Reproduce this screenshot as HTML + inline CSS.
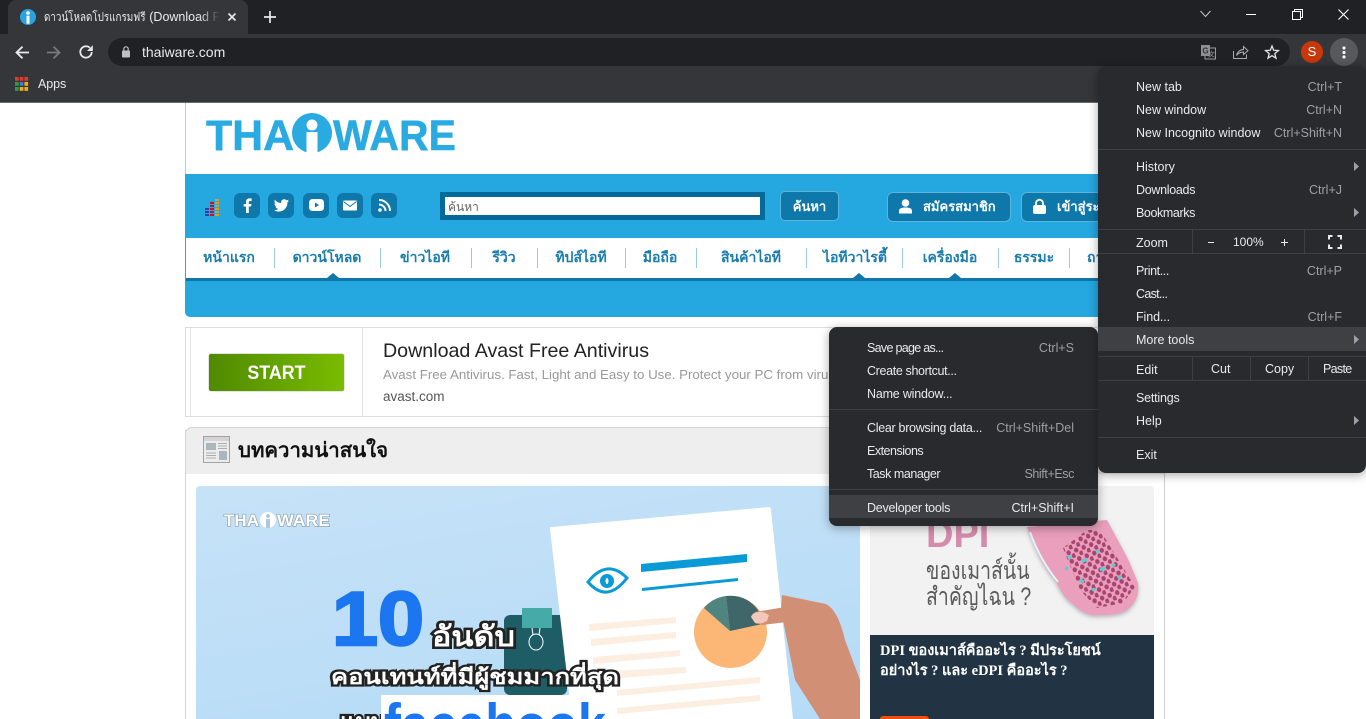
<!DOCTYPE html>
<html><head><meta charset="utf-8"><style>
html,body{margin:0;padding:0;width:1366px;height:719px;overflow:hidden;background:#fff}
body{position:relative;font-family:"Liberation Sans","Noto Sans CJK SC",sans-serif}
#w{position:absolute;left:0;top:0;width:1366px;height:719px;overflow:hidden}
.a{position:absolute}
.t{position:absolute;white-space:nowrap;line-height:20px;height:20px}
.m{color:#e8eaed;font-size:12.5px}
.s{color:#9aa0a6;font-size:12.5px;text-align:right}
.l{position:absolute;background:#3f4043}
.n{position:absolute;top:247px;color:#1a7cad;font-size:14px;font-weight:bold;line-height:20px;white-space:nowrap;transform:translateX(-50%)}
.d{position:absolute;top:248px;width:1px;height:20px;background:#9ccbe6}
.tri{position:absolute;top:273px;width:0;height:0;border-left:6px solid transparent;border-right:6px solid transparent;border-bottom:5px solid #0e76a8}
.b{position:absolute;background:#0e78ab;border-radius:6px}
svg{position:absolute;overflow:visible}
</style></head><body><div id="w">

<!-- chrome frame -->
<div class="a" style="left:0;top:0;width:1366px;height:34px;background:#202124"></div>
<div class="a" style="left:8px;top:0;width:240px;height:34px;background:#35363a;border-radius:8px 8px 0 0"></div>
<div class="a" style="left:0;top:34px;width:1366px;height:68px;background:#35363a"></div>
<div class="a" style="left:0;top:102px;width:1366px;height:1px;background:#6a6b6e"></div>
<svg style="left:20px;top:9px" width="16" height="16"><circle cx="8" cy="8" r="8" fill="#29a3e2"/><circle cx="8" cy="4" r="1.8" fill="#fff"/><rect x="6.5" y="6.7" width="3" height="8" fill="#fff"/></svg>
<div class="t" style="left:44px;top:7px;width:176px;overflow:hidden;color:#e8eaed;font-size:12.5px;-webkit-mask-image:linear-gradient(90deg,#000 88%,transparent)"><span style="display:inline-block;transform:scaleX(.82);transform-origin:left;margin-right:-22px;font-size:12px">ดาวน์โหลดโปรแกรมฟรี</span> (Download Fr</div>
<svg style="left:228px;top:13px" width="8" height="8"><path d="M.5 .5L7.5 7.5M7.5 .5L.5 7.5" stroke="#e8eaed" stroke-width="1.6"/></svg>
<svg style="left:264px;top:11px" width="12" height="12"><path d="M6 0V12M0 6H12" stroke="#e8eaed" stroke-width="1.7"/></svg>
<svg style="left:1200px;top:10px" width="11" height="8"><path d="M.5 1L5.5 6.5L10.5 1" stroke="#c4c6c9" fill="none"/></svg>
<div class="a" style="left:1246px;top:14px;width:10px;height:1px;background:#fff"></div>
<svg style="left:1292px;top:9px" width="11" height="11"><path d="M2.5 2.5V.5H10.5V8.5H8.5M.5 2.5H8.5V10.5H.5Z" stroke="#fff" fill="none"/></svg>
<svg style="left:1338px;top:9px" width="11" height="11"><path d="M.5 .5L10.5 10.5M10.5 .5L.5 10.5" stroke="#fff" stroke-width="1.1"/></svg>

<!-- toolbar -->
<svg style="left:15px;top:46px" width="14" height="13"><path d="M14 6.5H2M7.500 .7L1.500 6.500L7.500 12.300" stroke="#e8eaed" stroke-width="1.800" fill="none"/></svg>
<svg style="left:47px;top:46px" width="14" height="13"><path d="M0 6.5H12M6.500 .7L12.500 6.500L6.500 12.300" stroke="#77797c" stroke-width="1.800" fill="none"/></svg>
<svg style="left:79px;top:45px" width="14" height="14"><path d="M12.700 7A5.700 5.700 0 1 1 10.800 2.700" stroke="#e8eaed" stroke-width="1.800" fill="none"/><path d="M13.800 .3V6H8Z" fill="#e8eaed"/></svg>
<div class="a" style="left:108px;top:38px;width:1182px;height:28px;background:#202124;border-radius:14px"></div>
<svg style="left:122px;top:46px" width="9" height="12"><rect y="4.5" width="8" height="7" rx="1" fill="#bdc1c6"/><path d="M1.8 5V3A2.2 2.2 0 0 1 6.2 3V5" stroke="#bdc1c6" stroke-width="1.2" fill="none"/></svg>
<div class="t" style="left:142px;top:42px;color:#e8eaed;font-size:14px">thaiware.com</div>
<svg style="left:1201px;top:45px" width="15" height="15"><rect x="4" y="3" width="10.5" height="11" fill="none" stroke="#9a9ea3"/><rect x="0" y="0" width="9" height="11" fill="#8c9095"/><text x="4.5" y="8.5" font-size="8" text-anchor="middle" fill="#35363a" font-weight="bold">G</text><text x="10.5" y="11.5" font-size="7" text-anchor="middle" fill="#9a9ea3">文</text></svg>
<svg style="left:1233px;top:45px" width="15" height="14"><path d="M.5 6V13.5H13.5V9.5" stroke="#aaaeb3" fill="none"/><path d="M3.5 10.5C4.5 6.5 7.5 4.5 10.5 4.5V1.5L15 5.7L10.5 9.5V7C8 7 5.5 8 3.5 10.5Z" stroke="#aaaeb3" fill="none"/></svg>
<svg style="left:1265px;top:45px" width="14" height="14"><path d="M7 1L8.7 5.3L13.4 5.6L9.8 8.6L11 13.2L7 10.7L3 13.2L4.2 8.6L.6 5.6L5.3 5.3Z" stroke="#e0e2e5" stroke-width="1.3" fill="none"/></svg>
<div class="a" style="left:1301px;top:41px;width:22px;height:22px;border-radius:50%;background:#c8380a"></div>
<div class="t" style="left:1301px;top:42px;width:22px;text-align:center;color:#fff;font-size:13px">S</div>
<div class="a" style="left:1330px;top:38px;width:28px;height:28px;border-radius:50%;background:#58595c"></div>
<svg style="left:1342px;top:46px" width="4" height="13"><circle cx="2" cy="2" r="1.6" fill="#f1f3f4"/><circle cx="2" cy="6.5" r="1.6" fill="#f1f3f4"/><circle cx="2" cy="11" r="1.6" fill="#f1f3f4"/></svg>

<!-- bookmarks -->
<svg style="left:15px;top:77px" width="13" height="14">
<rect width="3.7" height="3.8" fill="#e0392d"/><rect x="4.7" width="3.7" height="3.8" fill="#e0392d"/><rect x="9.4" width="3.7" height="3.8" fill="#e0392d"/>
<rect y="5" width="3.7" height="3.8" fill="#2f9a4e"/><rect x="4.7" y="5" width="3.7" height="3.8" fill="#3f78e0"/><rect x="9.4" y="5" width="3.7" height="3.8" fill="#f0ad17"/>
<rect y="10" width="3.7" height="3.8" fill="#2f9a4e"/><rect x="4.7" y="10" width="3.7" height="3.8" fill="#f0ad17"/><rect x="9.4" y="10" width="3.7" height="3.8" fill="#f0ad17"/></svg>
<div class="t" style="left:38px;top:74px;color:#e8eaed;font-size:12.5px;letter-spacing:-.1px">Apps</div>

<!-- page container -->
<div class="a" style="left:185px;top:103px;width:1px;height:72px;background:#a6cfe4"></div>
<div class="a" style="left:1164px;top:103px;width:1px;height:616px;background:#cfcfcf"></div>
<div class="a" style="left:185px;top:430px;width:1px;height:289px;background:#d5d5d5"></div>

<!-- logo -->
<svg style="left:206px;top:113px" width="251" height="42">
<text x="0" y="37" font-family="Liberation Sans" font-weight="bold" font-size="43" fill="#29abe2" stroke="#29abe2" stroke-width=".5" textLength="88" lengthAdjust="spacingAndGlyphs">THA</text>
<circle cx="106" cy="20" r="20" fill="#29abe2"/><circle cx="106" cy="12" r="5.5" fill="#fff"/><path d="M100.500 19H111.500V40H100.500Z" fill="#fff"/>
<text x="127" y="37" font-family="Liberation Sans" font-weight="bold" font-size="43" fill="#29abe2" stroke="#29abe2" stroke-width=".5" textLength="123" lengthAdjust="spacingAndGlyphs">WARE</text>
</svg>

<!-- blue header -->
<div class="a" style="left:185px;top:174px;width:980px;height:143px;background:#25a7e0;border-radius:0 0 0 5px"></div>
<div class="a" style="left:186px;top:238px;width:979px;height:40px;background:#fff"></div>
<div class="a" style="left:186px;top:278px;width:979px;height:3px;background:#0e76a8"></div>
<svg style="left:205px;top:199px" width="15" height="18">
<path d="M0 9h4v2H0zM0 12h4v2H0zM0 15h4v2H0z" fill="#2b3da8"/>
<path d="M5 3h4v2H5zM5 6h4v2H5zM5 9h4v2H5zM5 12h4v2H5zM5 15h4v2H5z" fill="#c2112d"/>
<path d="M10 0h4v2h-4zM10 3h4v2h-4zM10 6h4v2h-4zM10 9h4v2h-4zM10 12h4v2h-4zM10 15h4v2h-4z" fill="#ee9a14"/></svg>
<div class="b" style="left:234px;top:193px;width:26px;height:25px"></div>
<div class="b" style="left:268px;top:193px;width:26px;height:25px"></div>
<div class="b" style="left:303px;top:193px;width:26px;height:25px"></div>
<div class="b" style="left:337px;top:193px;width:26px;height:25px"></div>
<div class="b" style="left:371px;top:193px;width:26px;height:25px"></div>
<svg style="left:243px;top:198px" width="9" height="15"><path d="M3 15V8.5H.7V6H3V4C3 1.6 4.4.4 6.4.4H8.6V3H7C6.1 3 5.8 3.4 5.8 4.2V6H8.5L8.1 8.5H5.8V15Z" fill="#fff"/></svg>
<svg style="left:273.500px;top:199px" width="15" height="13"><path d="M15 1.800C14.400 2 13.900 2.200 13.200 2.300 13.900 1.900 14.400 1.200 14.600.500 14 .900 13.300 1.100 12.600 1.300 11.300-.100 9.200-.100 8 1.100 7.200 1.900 6.900 3 7.200 4.100 4.700 4 2.400 2.800.900.800.100 2.200.500 4 1.800 4.900 1.300 4.900.800 4.700.400 4.500.400 6 1.500 7.300 2.900 7.600 2.500 7.700 2 7.700 1.500 7.600 1.900 8.900 3.100 9.800 4.400 9.800 3.100 10.800 1.600 11.400 0 11.200 1.400 12.100 3 12.600 4.700 12.600 10.400 12.600 13.600 7.800 13.400 3.500 14 3 14.600 2.500 15 1.800Z" fill="#fff"/></svg>
<svg style="left:308.500px;top:199px" width="15" height="12"><rect width="15" height="12" rx="3.500" fill="#fff"/><path d="M6 3.500L10 6L6 8.500Z" fill="#0e78ab"/></svg>
<svg style="left:343px;top:200px" width="14" height="11"><rect width="14" height="10" y=".5" rx="1" fill="#fff"/><path d="M.5 1.500L7 6.500L13.500 1.500" stroke="#0e78ab" fill="none"/></svg>
<svg style="left:378px;top:199px" width="13" height="13"><circle cx="2" cy="11" r="1.800" fill="#fff"/><path d="M1 5.500A6.500 6.500 0 0 1 7.500 12M1 1A11 11 0 0 1 12 12" stroke="#fff" stroke-width="2" fill="none"/></svg>

<!-- search -->
<div class="a" style="left:440px;top:192px;width:315px;height:18px;border:5px solid #046a9a;background:#fff"></div>
<div class="t" style="left:448px;top:197px;color:#666;font-size:12px">ค้นหา</div>
<div class="a" style="left:780px;top:191px;width:57px;height:28px;background:#0e78ab;border:1px solid #5fb4dc;border-radius:5px"></div>
<div class="t" style="left:780px;top:197px;width:59px;text-align:center;color:#fff;font-weight:bold;font-size:13px">ค้นหา</div>
<div class="a" style="left:887px;top:192px;width:122px;height:28px;background:#0e78ab;border:1px solid #5fb4dc;border-radius:6px"></div>
<svg style="left:899px;top:199px" width="13" height="15"><circle cx="6.500" cy="4" r="3.800" fill="#fff"/><path d="M0 14.500V12C0 9.500 2 8.500 6.500 8.500S13 9.500 13 12V14.500Z" fill="#fff"/></svg>
<div class="t" style="left:923px;top:197px;color:#fff;font-weight:bold;font-size:13px">สมัครสมาชิก</div>
<div class="a" style="left:1021px;top:192px;width:120px;height:28px;background:#0e78ab;border:1px solid #5fb4dc;border-radius:6px"></div>
<svg style="left:1033px;top:199px" width="13" height="15"><rect y="6" width="13" height="9" rx="2" fill="#fff"/><path d="M3 7V4.200A3.500 3.500 0 0 1 10 4.200V7" stroke="#fff" stroke-width="1.800" fill="none"/></svg>
<div class="t" style="left:1057px;top:197px;color:#fff;font-weight:bold;font-size:13px">เข้าสู่ระบบ</div>

<!-- nav -->
<div class="n" style="left:229px">หน้าแรก</div>
<div class="n" style="left:327px">ดาวน์โหลด</div>
<div class="n" style="left:425px">ข่าวไอที</div>
<div class="n" style="left:504px">รีวิว</div>
<div class="n" style="left:581px">ทิปส์ไอที</div>
<div class="n" style="left:660px">มือถือ</div>
<div class="n" style="left:751px">สินค้าไอที</div>
<div class="n" style="left:855px">ไอทีวาไรตี้</div>
<div class="n" style="left:950px">เครื่องมือ</div>
<div class="n" style="left:1034px">ธรรมะ</div>
<div class="n" style="left:1113px">ถามตอบ</div>
<div class="d" style="left:274px"></div><div class="d" style="left:380px"></div><div class="d" style="left:471px"></div><div class="d" style="left:537px"></div><div class="d" style="left:625px"></div><div class="d" style="left:696px"></div><div class="d" style="left:806px"></div><div class="d" style="left:902px"></div><div class="d" style="left:998px"></div><div class="d" style="left:1069px"></div>
<div class="tri" style="left:327px"></div><div class="tri" style="left:853px"></div><div class="tri" style="left:949px"></div>

<!-- ad -->
<div class="a" style="left:185px;top:327px;width:979px;height:90px;border-top:1px solid #ddd;border-bottom:1px solid #ddd;border-left:1px solid #ddd;box-sizing:border-box"></div>
<div class="a" style="left:190px;top:327px;width:1px;height:89px;background:#e2e2e2"></div>
<div class="a" style="left:362px;top:327px;width:1px;height:89px;background:#e2e2e2"></div>
<div class="a" style="left:209px;top:354px;width:135px;height:37px;border-radius:2px;background:linear-gradient(90deg,#4f8a00,#79bc00);box-shadow:0 0 1px #555"></div>
<div class="t" style="left:209px;top:364px;width:135px;text-align:center;color:#fff;font-weight:bold;font-size:19px;transform:scaleX(.94)">START</div>
<div class="t" style="left:383px;top:341px;color:#222;font-size:19.650px">Download Avast Free Antivirus</div>
<div class="t" style="left:383px;top:365px;color:#999;font-size:13.300px">Avast Free Antivirus. Fast, Light and Easy to Use. Protect your PC from viruses</div>
<div class="t" style="left:383px;top:387px;color:#555;font-size:13.500px">avast.com</div>

<!-- section -->
<div class="a" style="left:185px;top:427px;width:979px;height:47px;background:#eee;border-top:1px solid #d5d5d5;border-left:1px solid #d5d5d5;border-radius:7px 0 0 0;box-sizing:border-box"></div>
<svg style="left:203px;top:436px" width="28" height="27"><rect x=".5" y=".5" width="26" height="26" fill="#ececec" stroke="#a2a2a2"/><rect x="1" y="1" width="25" height="4" fill="#d4d4d4"/><rect x="3" y="7" width="10" height="7" fill="#a9b6bc"/><path d="M15 7.500h9M15 10h9M15 12.500h9M3 17h10M3 19.500h10M3 22h10" stroke="#999" stroke-width=".7"/><rect x="16" y="15" width="8" height="9" fill="#a9b6bc"/></svg>
<div class="t" style="left:238px;top:441px;color:#111;font-weight:bold;font-size:20.400px">บทความน่าสนใจ</div>

<!-- hero image -->
<div class="a" style="left:196px;top:486px;width:664px;height:233px;background:linear-gradient(170deg,#c6e2f7,#b5dbf7);border-radius:4px 4px 0 0;overflow:hidden"></div>
<svg style="left:0;top:0;overflow:hidden;clip-path:inset(486px 506px 0 196px)" width="1366" height="719" font-family="Liberation Sans">
<text x="224" y="526" font-size="16.500" font-weight="bold" fill="#fff" stroke="#8a9ba8" stroke-width="1.200" paint-order="stroke" textLength="35" lengthAdjust="spacingAndGlyphs">THA</text>
<text x="277" y="526" font-size="16.500" font-weight="bold" fill="#fff" stroke="#8a9ba8" stroke-width="1.200" paint-order="stroke" textLength="53" lengthAdjust="spacingAndGlyphs">WARE</text>
<circle cx="268" cy="520" r="8" fill="#fff"/><circle cx="268" cy="516" r="2" fill="#b0c8da"/><rect x="266" y="519" width="4" height="9" fill="#b0c8da"/>
<rect x="504" y="615" width="63" height="80" rx="6" fill="#1f5d66"/>
<path d="M550 529Q549 527 552 527L769 507Q771 507 771 510L793 719H572Z" fill="#fff"/>
<rect x="522" y="608" width="30" height="20" fill="#46aaa9"/>
<ellipse cx="536" cy="642" rx="7" ry="8" fill="none" stroke="#fff" stroke-width="1"/><path d="M532 628L533 635M540 628L539 635" stroke="#fff"/>
<path d="M588 582Q607 558 627 578Q607 604 588 582Z" fill="#fff" stroke="#0a9ad6" stroke-width="3"/><circle cx="607" cy="581" r="7" fill="#0a9ad6"/><ellipse cx="607" cy="581" rx="1.500" ry="3" fill="#fff"/>
<path d="M641 564L747 554V562L641 572Z" fill="#0a9ad6"/>
<path d="M642 588L738 578V581L642 591Z" fill="#0a9ad6"/>
<path d="M589 624L676 617V623L589 631ZM591 639L676 632V638L591 646ZM593 657L680 650V656L593 664ZM595 672L686 667V673L595 680ZM617 690L760 677V683L617 696ZM617 708L760 695V701L617 714Z" fill="#fdeee2"/>
<ellipse cx="730.500" cy="632" rx="36.500" ry="36" fill="#fcb675"/>
<path d="M730 631L704 608Q712 598 726 596Z" fill="#4f8580"/>
<path d="M730 631L726 596Q746 594 758 610L762 624Z" fill="#3f6769"/>
<path d="M782 595L826 604Q838 610 845 640L860 680V719H820L795 680L787 640L781 610Z" fill="#d18f75"/>
<path d="M755 612L785 607L787 622L762 625Q750 620 755 612Z" fill="#d18f75"/>
<path d="M751 617Q753 611 763 612L769 615L767 621Q760 625 755 623Z" fill="#f4c7bb"/>
<text x="332" y="645" font-size="76" font-weight="bold" fill="#1b76f0" stroke="#1b76f0" stroke-width="2.500" textLength="92" lengthAdjust="spacingAndGlyphs">10</text>
<text x="432" y="646" font-size="28" font-weight="bold" fill="#fff" stroke="#222" stroke-width="5" paint-order="stroke" textLength="83" lengthAdjust="spacingAndGlyphs">อันดับ</text>
<text x="331" y="684" font-size="21" font-weight="bold" fill="#fff" stroke="#222" stroke-width="4.500" paint-order="stroke" textLength="288" lengthAdjust="spacingAndGlyphs">คอนเทนท์ที่มีผู้ชมมากที่สุด</text>
<text x="340" y="730" font-size="24" font-weight="bold" fill="#fff" stroke="#222" stroke-width="4.500" paint-order="stroke">แบบ</text>
<rect x="381" y="695" width="236" height="24" fill="#fff"/>
<text x="384" y="746" font-size="60" font-weight="bold" fill="#1b76f0" textLength="222" lengthAdjust="spacingAndGlyphs">facebook</text>
</svg>

<!-- right card -->
<div class="a" style="left:870px;top:486px;width:284px;height:149px;background:#f2f2f2;border-radius:4px 4px 0 0"></div>
<div class="t" style="left:926px;top:520px;height:30px;line-height:30px;font-size:38px;font-weight:bold;color:#d58bab;overflow:hidden">DPI</div>
<div class="t" style="left:926px;top:558px;height:26px;line-height:26px;font-size:25px;color:#5a5a5a;transform:scaleX(.78);transform-origin:left">ของเมาส์นั้น</div>
<div class="t" style="left:926px;top:584px;height:26px;line-height:26px;font-size:25px;color:#5a5a5a;transform:scaleX(.78);transform-origin:left">สำคัญไฉน ?</div>
<svg style="left:1020px;top:520px" width="125" height="105">
<defs><filter id="sh"><feDropShadow dx="0" dy="2" stdDeviation="2" flood-color="#777" flood-opacity=".5"/></filter>
<pattern id="hx" width="8" height="9" patternUnits="userSpaceOnUse" patternTransform="rotate(-20)"><ellipse cx="2.500" cy="2.500" rx="2.200" ry="2.500" fill="#a8456e"/><ellipse cx="6.500" cy="7" rx="2.200" ry="2.500" fill="#a8456e"/></pattern></defs>
<path d="M7 7L12 20Q22 45 35 60Q45 80 52 83Q65 97 80 95Q100 95 107 90Q120 80 118 63Q112 48 107 37L87 0Z" fill="#ea9fbc" filter="url(#sh)"/>
<path d="M43 28L67 10H80L115 67L103 83L77 88L60 70Z" fill="url(#hx)"/>
<path d="M48 36l3 2M62 42l5-3M76 32l3-1M60 60l4 2M80 50l5-2M45 48l3 1M92 46l3-2M72 70l3-1M98 58l3-1" stroke="#4cd4d6" stroke-width="3"/>
<path d="M10 12Q20 40 38 62" stroke="#e3f2f7" stroke-width="2" fill="none"/>
</svg>
<div class="a" style="left:870px;top:635px;width:284px;height:84px;background:#223344"></div>
<div class="t" style="left:880px;top:641px;color:#fff;font-family:'Liberation Serif','Noto Serif CJK SC',serif;font-weight:bold;font-size:14.500px">DPI ของเมาส์คืออะไร ? มีประโยชน์</div>
<div class="t" style="left:880px;top:661px;color:#fff;font-family:'Liberation Serif','Noto Serif CJK SC',serif;font-weight:bold;font-size:14.500px">อย่างไร ? และ eDPI คืออะไร ?</div>
<div class="a" style="left:880px;top:716px;width:49px;height:3px;background:#f0500f;border-radius:3px 3px 0 0"></div>

<!-- sub menu -->
<div class="a" style="left:829px;top:327px;width:269px;height:199px;background:#292a2d;border-radius:8px;box-shadow:0 2px 10px rgba(0,0,0,.35)"></div>
<div class="a" style="left:829px;top:495px;width:269px;height:23px;background:#3f4043"></div>
<div class="t m" style="left:867px;top:338px;letter-spacing:-.7px">Save page as...</div>
<div class="t m" style="left:867px;top:361px;letter-spacing:-.35px">Create shortcut...</div>
<div class="t m" style="left:867px;top:384px;letter-spacing:-.2px">Name window...</div>
<div class="t m" style="left:867px;top:418px;letter-spacing:-.3px">Clear browsing data...</div>
<div class="t m" style="left:867px;top:441px;letter-spacing:-.5px">Extensions</div>
<div class="t m" style="left:867px;top:464px;letter-spacing:-.45px">Task manager</div>
<div class="t m" style="left:867px;top:498px;letter-spacing:-.25px">Developer tools</div>
<div class="t s" style="right:292px;top:338px">Ctrl+S</div>
<div class="t s" style="right:292px;top:418px">Ctrl+Shift+Del</div>
<div class="t s" style="right:292px;top:464px;letter-spacing:-.4px">Shift+Esc</div>
<div class="t s" style="right:292px;top:498px;color:#e8eaed">Ctrl+Shift+I</div>
<div class="l" style="left:829px;top:409px;width:269px;height:1px"></div>
<div class="l" style="left:829px;top:489px;width:269px;height:1px"></div>

<!-- main menu -->
<div class="a" style="left:1098px;top:66px;width:268px;height:407px;background:#292a2d;border-radius:8px;box-shadow:0 2px 10px rgba(0,0,0,.35)"></div>
<div class="a" style="left:1098px;top:327px;width:268px;height:24px;background:#3f4043"></div>
<div class="t m" style="left:1136px;top:77px">New tab</div>
<div class="t m" style="left:1136px;top:100px">New window</div>
<div class="t m" style="left:1136px;top:123px">New Incognito window</div>
<div class="t m" style="left:1136px;top:157px">History</div>
<div class="t m" style="left:1136px;top:180px;letter-spacing:-.3px">Downloads</div>
<div class="t m" style="left:1136px;top:203px;letter-spacing:-.4px">Bookmarks</div>
<div class="t m" style="left:1136px;top:233px">Zoom</div>
<div class="t m" style="left:1136px;top:261px;letter-spacing:-.4px">Print...</div>
<div class="t m" style="left:1136px;top:284px;letter-spacing:-.7px">Cast...</div>
<div class="t m" style="left:1136px;top:307px;letter-spacing:-.1px">Find...</div>
<div class="t m" style="left:1136px;top:330px">More tools</div>
<div class="t m" style="left:1136px;top:360px">Edit</div>
<div class="t m" style="left:1136px;top:388px;letter-spacing:-.2px">Settings</div>
<div class="t m" style="left:1136px;top:411px">Help</div>
<div class="t m" style="left:1136px;top:445px">Exit</div>
<div class="t s" style="right:24px;top:77px">Ctrl+T</div>
<div class="t s" style="right:24px;top:100px">Ctrl+N</div>
<div class="t s" style="right:24px;top:123px">Ctrl+Shift+N</div>
<div class="t s" style="right:24px;top:180px">Ctrl+J</div>
<div class="t s" style="right:24px;top:261px">Ctrl+P</div>
<div class="t s" style="right:24px;top:307px">Ctrl+F</div>
<div class="l" style="left:1098px;top:149px;width:268px;height:1px"></div>
<div class="l" style="left:1098px;top:229px;width:268px;height:1px"></div>
<div class="l" style="left:1098px;top:253px;width:268px;height:1px"></div>
<div class="l" style="left:1098px;top:356px;width:268px;height:1px"></div>
<div class="l" style="left:1098px;top:380px;width:268px;height:1px"></div>
<div class="l" style="left:1098px;top:437px;width:268px;height:1px"></div>
<div class="l" style="left:1192px;top:229px;width:1px;height:24px"></div>
<div class="l" style="left:1304px;top:229px;width:1px;height:24px"></div>
<div class="l" style="left:1192px;top:356px;width:1px;height:24px"></div>
<div class="l" style="left:1250px;top:356px;width:1px;height:24px"></div>
<div class="l" style="left:1308px;top:356px;width:1px;height:24px"></div>
<div class="a" style="left:1208px;top:242px;width:6px;height:1px;background:#e8eaed"></div>
<div class="t m" style="left:1233px;top:232px;font-size:12px">100%</div>
<svg style="left:1281px;top:239px" width="7" height="7"><path d="M3.500 0V7M0 3.500H7" stroke="#e8eaed"/></svg>
<svg style="left:1328px;top:235px" width="14" height="14"><path d="M1 4.500V1H4.500M9.500 1H13V4.500M13 9.500V13H9.500M4.500 13H1V9.500" stroke="#e8eaed" stroke-width="2" fill="none"/></svg>
<div class="t m" style="left:1211px;top:359px">Cut</div>
<div class="t m" style="left:1265px;top:359px">Copy</div>
<div class="t m" style="left:1323px;top:359px;letter-spacing:-.7px">Paste</div>
<svg style="left:1354px;top:162px" width="5" height="9"><path d="M0 0L5 4.500L0 9Z" fill="#9aa0a6"/></svg>
<svg style="left:1354px;top:208px" width="5" height="9"><path d="M0 0L5 4.500L0 9Z" fill="#9aa0a6"/></svg>
<svg style="left:1354px;top:335px" width="5" height="9"><path d="M0 0L5 4.500L0 9Z" fill="#9aa0a6"/></svg>
<svg style="left:1354px;top:416px" width="5" height="9"><path d="M0 0L5 4.500L0 9Z" fill="#9aa0a6"/></svg>
</div></body></html>
